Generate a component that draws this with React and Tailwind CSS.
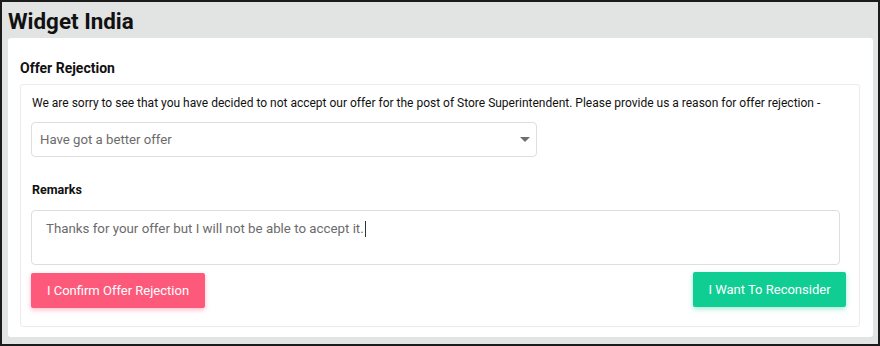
export default function App() {
  return (
    <div className="w-[880px] h-[346px] border-2 border-[#1b1b1b] bg-[#e2e3e3] overflow-hidden" style={{ fontFamily: "Roboto, 'Liberation Sans', sans-serif" }}>
      <div className="h-[36px] pl-[6px] pt-[2px] flex items-center">
        <h1 className="text-[22.4px] font-bold text-[#111] leading-none">Widget India</h1>
      </div>
      <div className="ml-[6px] w-[865px] h-[299px] bg-white rounded-[3px] px-[12px] pt-[22px]">
        <h2 className="text-[14px] font-bold text-[#111] leading-[16px]">Offer Rejection</h2>
        <div className="mt-[8px] w-[840px] h-[243px] border border-[#ececec] rounded-[3px] px-[10px] pt-[9px]">
          <p className="text-[12px] text-[#111] leading-[18px] pl-[1px] whitespace-nowrap">
            We are sorry to see that you have decided to not accept our offer for the post of Store Superintendent. Please provide us a reason for offer rejection -
          </p>
          <div className="mt-[10px] w-[506px] h-[35px] border border-[#dedede] rounded-[4px] flex items-center justify-between pl-[8px] pr-[6px]">
            <span className="text-[13.2px] text-[#6b6b6b]">Have got a better offer</span>
            <svg width="10" height="6" viewBox="0 0 10 6"><path d="M0 0 L10 0 L5 5 Z" fill="#6f6f6f" /></svg>
          </div>
          <div className="mt-[25px] text-[12.5px] font-bold text-[#111] leading-[16px] pl-[1px]">Remarks</div>
          <div className="mt-[12px] w-[809px] h-[55px] border border-[#dedede] rounded-[4px] pl-[14px] pt-[7px] leading-[20px]">
            <span className="text-[13.3px] text-[#6b6b6b]">Thanks for your offer but I will not be able to accept it.</span>
            <span className="inline-block w-px h-[16px] bg-[#333] align-middle ml-px"></span>
          </div>
          <div className="mt-[7px] flex justify-between items-start w-[815px]">
            <button className="mt-px w-[174px] h-[35px] bg-[#fd5a7b] text-white text-[13px] rounded-[2px] shadow-[0_2px_5px_rgba(253,90,123,0.4)]">I Confirm Offer Rejection</button>
            <button className="w-[153px] h-[35px] bg-[#10cd94] text-white text-[13px] rounded-[2px] shadow-[0_2px_5px_rgba(16,205,148,0.4)]">I Want To Reconsider</button>
          </div>
        </div>
      </div>
    </div>
  );
}
